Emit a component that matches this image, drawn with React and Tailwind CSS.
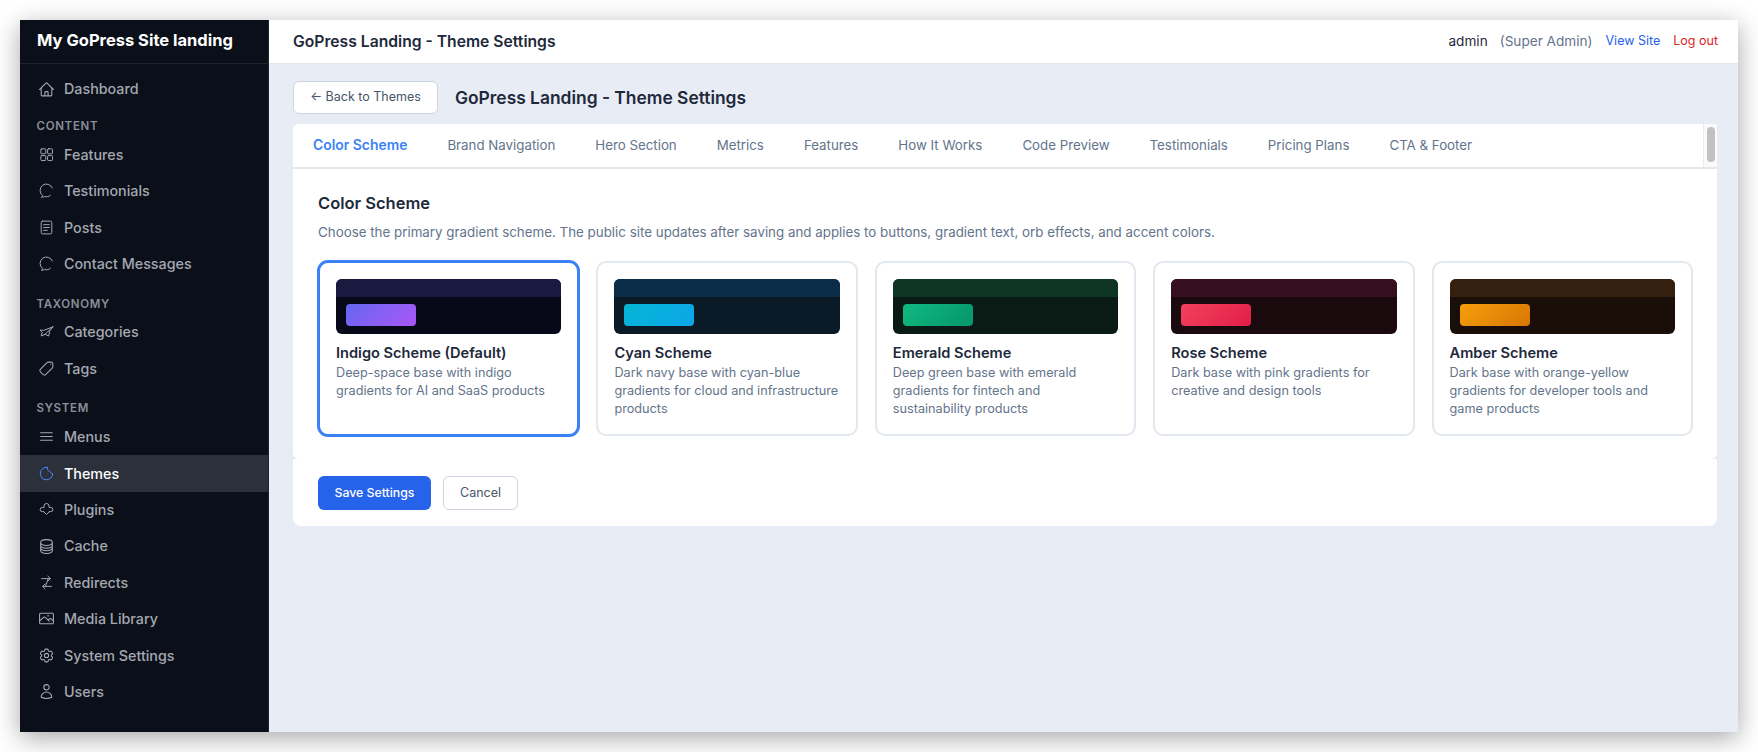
import {
  HiOutlineHome,
  HiOutlineTag,
  HiOutlineBars3,
  HiOutlineCircleStack,
  HiOutlinePhoto,
  HiOutlineCog6Tooth,
  HiOutlineUser,
} from 'react-icons/hi2'

const iconCls = 'w-[17px] h-[17px] shrink-0'

const Glyph = ({ children }) => (
  <svg viewBox="0 0 24 24" fill="none" stroke="currentColor" strokeWidth="1.4" strokeLinecap="round" strokeLinejoin="round" className={iconCls}>
    {children}
  </svg>
)

const Grid = () => (
  <Glyph>
    <rect x="4" y="4" width="7" height="7" rx="1.200" />
    <rect x="13.500" y="4" width="7" height="7" rx="1.200" />
    <rect x="4" y="13.500" width="7" height="7" rx="1.200" />
    <rect x="13.500" y="13.500" width="7" height="7" rx="1.200" />
  </Glyph>
)
const Chat = () => (
  <Glyph>
    <path d="M20.300 8.500A9 9 0 1 0 6.500 19c.2 .9-.6 1.700-1.800 2.300 1.800.3 3.400 0 4.600-.8 2.600.8 6 .4 8.200-1.700" />
  </Glyph>
)
const Doc = () => (
  <Glyph>
    <rect x="4.500" y="3" width="15" height="18" rx="2" />
    <path d="M8 8h8M8 12h8M8 16h5" />
  </Glyph>
)
const Plane = () => (
  <Glyph>
    <path d="M21 4 8 9 3 8.500l3 3.500-1.500 5L10 14.500l5 2.500 1.500-7z" />
    <path d="M21 4 10 14.500" />
  </Glyph>
)
const Moonish = () => (
  <Glyph>
    <path d="M13 3.300A8.800 8.800 0 1 0 20.800 12c-1.600 0-3.200-.6-3.600-2.500-2.200-.2-4.200-2.500-4.200-6.200z" />
  </Glyph>
)
const Puzzle = () => (
  <Glyph>
    <path d="M8.500 9V7a3.500 3.500 0 0 1 7 0v2H18a3 3 0 0 1 0 6h-2.500v.5L12 19l-3.500-3.500V15H6a3 3 0 0 1 0-6z" />
  </Glyph>
)
const Redirect = () => (
  <Glyph>
    <path d="M5 6.500h12M14 3 17.500 6.500 14 10" />
    <path d="M14.500 6.500l-4 11" />
    <path d="M19 17.500H7M10 14 6.500 17.500 10 21" />
  </Glyph>
)

const sections = [
  { items: [{ name: 'Dashboard', icon: <HiOutlineHome className={iconCls} /> }] },
  {
    title: 'CONTENT',
    gap: 'mt-[12px] mb-[3px]',
    items: [
      { name: 'Features', icon: <Grid /> },
      { name: 'Testimonials', icon: <Chat /> },
      { name: 'Posts', icon: <Doc /> },
      { name: 'Contact Messages', icon: <Chat /> },
    ],
  },
  {
    title: 'TAXONOMY',
    gap: 'mt-[15px] mb-[3px]',
    items: [
      { name: 'Categories', icon: <Plane /> },
      { name: 'Tags', icon: <HiOutlineTag className={`${iconCls} -scale-x-100`} /> },
    ],
  },
  {
    title: 'SYSTEM',
    gap: 'mt-[14px] mb-[4px]',
    items: [
      { name: 'Menus', icon: <HiOutlineBars3 className={iconCls} /> },
      { name: 'Themes', icon: <Moonish />, active: true },
      { name: 'Plugins', icon: <Puzzle /> },
      { name: 'Cache', icon: <HiOutlineCircleStack className={iconCls} /> },
      { name: 'Redirects', icon: <Redirect /> },
      { name: 'Media Library', icon: <HiOutlinePhoto className={iconCls} /> },
      { name: 'System Settings', icon: <HiOutlineCog6Tooth className={iconCls} /> },
      { name: 'Users', icon: <HiOutlineUser className={iconCls} /> },
    ],
  },
]

const tabs = ['Color Scheme', 'Brand Navigation', 'Hero Section', 'Metrics', 'Features', 'How It Works', 'Code Preview', 'Testimonials', 'Pricing Plans', 'CTA & Footer']

const schemes = [
  { name: 'Indigo Scheme (Default)', desc: 'Deep-space base with indigo gradients for AI and SaaS products', base: 'bg-[#070818]', strip: 'bg-[#1a1a40]', btn: 'from-[#6366f1] to-[#a855f7]', selected: true },
  { name: 'Cyan Scheme', desc: 'Dark navy base with cyan-blue gradients for cloud and infrastructure products', base: 'bg-[#0a1a26]', strip: 'bg-[#0c2d48]', btn: 'from-[#06b6d4] to-[#0ea5e9]' },
  { name: 'Emerald Scheme', desc: 'Deep green base with emerald gradients for fintech and sustainability products', base: 'bg-[#0a1a14]', strip: 'bg-[#0f3526]', btn: 'from-[#10b981] to-[#059669]' },
  { name: 'Rose Scheme', desc: 'Dark base with pink gradients for creative and design tools', base: 'bg-[#1a0a0e]', strip: 'bg-[#360f20]', btn: 'from-[#f43f5e] to-[#e11d48]' },
  { name: 'Amber Scheme', desc: 'Dark base with orange-yellow gradients for developer tools and game products', base: 'bg-[#1a0f08]', strip: 'bg-[#352010]', btn: 'from-[#f59e0b] to-[#d97706]' },
]

const Sidebar = () => (
  <aside className="w-[249px] shrink-0 bg-[#0b0f19] border-r border-[#1f2530]">
    <div className="h-[44px] pl-[17px] flex items-center pb-[3px] border-b border-[#1f2530] text-white text-[16.500px] font-bold">
      My GoPress Site landing
    </div>
    <nav className="pt-[7px]">
      {sections.map((s, i) => (
        <div key={i}>
          {s.title && (
            <div className={`${s.gap} pl-[16.500px] h-[14px] leading-[14px] text-[11.500px] font-semibold tracking-[0.06em] text-[#8a8f99]`}>
              {s.title}
            </div>
          )}
          {s.items.map((it) => (
            <div
              key={it.name}
              className={`h-[36.400px] pl-[18px] flex items-center gap-[9px] text-[14.300px] font-medium ${it.active ? 'bg-[#2b303b] text-white' : 'text-[#a4a8b1]'}`}
            >
              <span className={it.active ? 'text-[#4f86f7]' : 'text-[#a4a8b1]'}>{it.icon}</span>
              <span>{it.name}</span>
            </div>
          ))}
        </div>
      ))}
    </nav>
  </aside>
)

const SchemeCard = ({ s }) => (
  <div className={`rounded-[10px] bg-white p-[16px] border-2 ${s.selected ? 'border-[#3b82f6] ring-1 ring-[#3b82f6]' : 'border-[#e2e8f0]'}`}>
    <div className={`h-[55px] rounded-[6px] overflow-hidden ${s.base}`}>
      <div className={`h-[18px] ${s.strip}`} />
      <div className={`mt-[7px] ml-[10px] w-[70px] h-[22px] rounded-[4px] bg-linear-135 ${s.btn}`} />
    </div>
    <div className="mt-[10px] text-[14.600px] leading-[18px] font-semibold text-[#1e293b]">{s.name}</div>
    <div className="mt-[2px] text-[12.700px] leading-[18px] text-[#64748b]">{s.desc}</div>
  </div>
)

const App = () => (
  <div className="h-[752px] bg-white p-[20px] font-['Inter',sans-serif]">
    <div className="h-full flex shadow-[0_6px_24px_rgba(0,0,0,0.35)]">
      <Sidebar />
      <main className="flex-1 min-w-0 bg-[#e8ecf4]">
        <header className="h-[44px] bg-white border-b border-[#e2e8f0] pl-[24px] pr-[20px] flex items-center justify-between">
          <div className="text-[15.700px] font-semibold text-[#1e293b]">GoPress Landing - Theme Settings</div>
          <div className="flex items-center text-[13.600px] text-[#1e293b] pb-[1px]">
            <span>admin</span>
            <span className="ml-[12px] text-[#64748b]">(Super Admin)</span>
            <a className="ml-[13px] text-[12.500px] text-[#2563eb]">View Site</a>
            <a className="ml-[13px] text-[12.500px] text-[#dc2626]">Log out</a>
          </div>
        </header>
        <div className="pl-[24px] pr-[21px] pt-[17px]">
          <div className="flex items-center gap-[17px] mb-[10px]">
            <button className="w-[145px] h-[33px] rounded-[6px] bg-white border border-[#cbd5e1] text-[12.500px] text-[#475569]">← Back to Themes</button>
            <h1 className="pt-[2px] text-[17.400px] font-semibold text-[#1e293b]">GoPress Landing - Theme Settings</h1>
          </div>
          <div className="flex h-[43px] bg-white rounded-t-[6px]">
            <div className="flex-1 flex">
              {tabs.map((t, i) => (
                <div key={t} className={`px-[20px] flex items-center ${i === 0 ? 'text-[13.900px] font-semibold text-[#3b82f6]' : 'text-[13.300px] text-[#64748b]'}`}>{t}</div>
              ))}
            </div>
            <div className="w-[14px] bg-[#fafafa] border-l border-[#ececec] flex justify-center pt-[3px]">
              <div className="w-[8px] h-[35px] rounded-[4px] bg-[#c1c1c1]" />
            </div>
          </div>
          <section className="bg-white border-t-2 border-[#e2e8f0] rounded-b-[6px] h-[292px] pl-[25px] pr-[24px] pt-[22px]">
            <h2 className="text-[16.500px] leading-[24px] font-semibold text-[#1e293b]">Color Scheme</h2>
            <p className="mt-[7px] text-[13.350px] leading-[20px] text-[#64748b]">Choose the primary gradient scheme. The public site updates after saving and applies to buttons, gradient text, orb effects, and accent colors.</p>
            <div className="mt-[19px] grid grid-cols-5 gap-[17px]">
              {schemes.map((s) => <SchemeCard key={s.name} s={s} />)}
            </div>
          </section>
          <div className="bg-white rounded-b-[8px] h-[67px] px-[25px] pt-[17px] flex items-start gap-[12px]">
            <button className="w-[113px] h-[34px] rounded-[6px] bg-[#2563eb] text-white text-[12.300px] font-medium">Save Settings</button>
            <button className="w-[75px] h-[34px] rounded-[6px] bg-white border border-[#cbd5e1] text-[12.500px] text-[#475569]">Cancel</button>
          </div>
        </div>
      </main>
    </div>
  </div>
)

export default App
